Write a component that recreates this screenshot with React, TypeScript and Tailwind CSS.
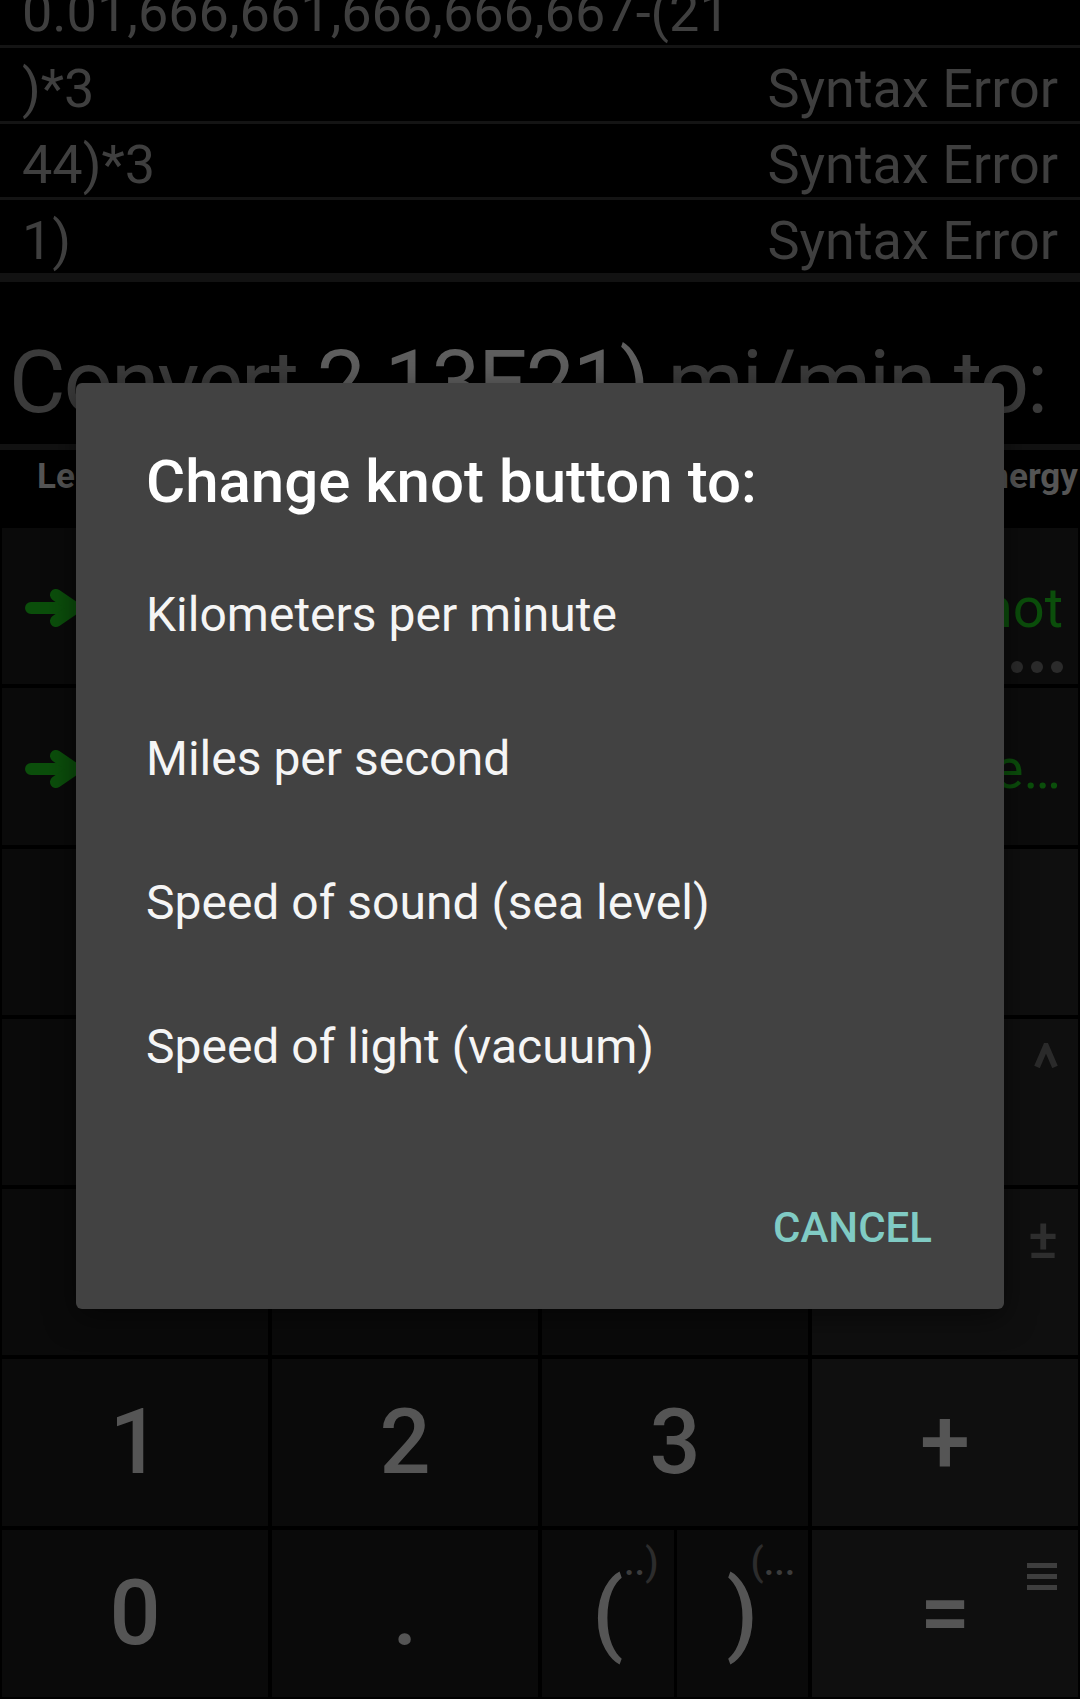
import React from 'react';

/**
 * Unit converter screen with the "Change knot button to:" dialog open.
 * Background colours are already dimmed as under the dialog scrim.
 */

const historyRows = [
  { expr: '0.01,666,661,666,666,667-(21', result: '' },
  { expr: ')*3', result: 'Syntax Error' },
  { expr: '44)*3', result: 'Syntax Error' },
  { expr: '1)', result: 'Syntax Error' },
];

const tabs = ['Length', 'Area', 'Speed', 'Energy'];

const options = [
  'Kilometers per minute',
  'Miles per second',
  'Speed of sound (sea level)',
  'Speed of light (vacuum)',
];

function GreenArrow() {
  return (
    <svg width="60" height="40" viewBox="0 0 60 40" fill="none">
      <path d="M6 20 H56" stroke="#0b4e0b" strokeWidth="12" strokeLinecap="round" />
      <path d="M31 7 L50 20 L31 33" stroke="#0b4e0b" strokeWidth="12" strokeLinecap="round" strokeLinejoin="round" />
    </svg>
  );
}

const digit = "text-[90px] leading-none font-medium text-[#555555]";

export default function App() {
  return (
    <div className="relative w-[1080px] h-[1699px] overflow-hidden bg-black font-['Roboto',sans-serif]">
      {/* history list, scrolled so the first row is cut off */}
      <div className="h-[273px] overflow-hidden">
        <div className="-mt-[28px] flex flex-col">
          {historyRows.map((row, i) => (
            <div
              key={i}
              className={
                'flex h-[76px] justify-between px-[22px] pt-[8px] text-[54px] leading-[65px] text-[#3f3f3f] whitespace-nowrap' +
                (i < historyRows.length - 1 ? ' border-b-[3px] border-[#141414]' : '')
              }
            >
              <span>{row.expr}</span>
              <span>{row.result}</span>
            </div>
          ))}
        </div>
      </div>
      <div className="h-[9px] bg-[#121212]" />

      {/* convert prompt */}
      <div className="flex h-[162px] items-end pb-[11px] pl-[9px] text-[87px] leading-[102px] tracking-[-2px] whitespace-nowrap text-[#3b3b3b]">
        <span>
          Convert <span className="text-[#5e5e5e]">2.13E21)</span> mi/min to:
        </span>
      </div>
      <div className="h-[6px] bg-[#121212]" />

      {/* category tabs */}
      <div className="flex h-[78px] items-start justify-between pl-[37px] pr-[2px] pt-[6px] text-[35px] leading-[41px] font-bold text-[#555555]">
        {tabs.map((t) => (
          <span key={t}>{t}</span>
        ))}
      </div>

      {/* keypad */}
      <div className="flex flex-col gap-[4px] px-[2px]">
        <div className="flex h-[156px] gap-[4px]">
          <div className="flex flex-[3] items-center bg-[#0a0a0a] pl-[23px] pt-[4px]">
            <GreenArrow />
          </div>
          <div className="flex w-[266px] flex-col items-end bg-[#0c0c0c] pr-[15px] pt-[52px]">
            <span className="text-[56px] leading-[56px] text-[#0b4e0b]">knot</span>
            <div className="mt-[25px] flex gap-[8px]">
              <span className="h-[12px] w-[12px] rounded-full bg-[#2b2b2b]" />
              <span className="h-[12px] w-[12px] rounded-full bg-[#2b2b2b]" />
              <span className="h-[12px] w-[12px] rounded-full bg-[#2b2b2b]" />
            </div>
          </div>
        </div>
        <div className="flex h-[157px] gap-[4px]">
          <div className="flex flex-[3] items-center bg-[#0a0a0a] pl-[23px] pt-[4px]">
            <GreenArrow />
          </div>
          <div className="flex w-[266px] flex-col items-end bg-[#0c0c0c] pr-[17px] pt-[53px]">
            <span className="text-[56px] leading-[56px] text-[#0b4e0b]">More…</span>
          </div>
        </div>

        <div className="grid h-[166px] grid-cols-4 gap-[4px]">
          <div className="bg-[#0a0a0a]" />
          <div className="bg-[#0a0a0a]" />
          <div className="bg-[#0a0a0a]" />
          <div className="bg-[#0f0f0f]" />
        </div>
        <div className="grid h-[166px] grid-cols-4 gap-[4px]">
          <div className="bg-[#0a0a0a]" />
          <div className="bg-[#0a0a0a]" />
          <div className="bg-[#0a0a0a]" />
          <div className="relative bg-[#0f0f0f]">
            <svg className="absolute right-[20px] top-[24px]" width="24" height="25" viewBox="0 0 24 25" fill="none">
              <path d="M3 24 L12 3 L21 24" stroke="#2a2a2a" strokeWidth="6" strokeLinejoin="miter" />
            </svg>
          </div>
        </div>
        <div className="grid h-[166px] grid-cols-4 gap-[4px]">
          <div className="bg-[#0a0a0a]" />
          <div className="bg-[#0a0a0a]" />
          <div className="bg-[#0a0a0a]" />
          <div className="relative bg-[#0f0f0f]">
            <span className="absolute right-[20px] top-[22px] text-[56px] leading-none font-medium text-[#2e2e2e]">±</span>
          </div>
        </div>
        <div className="grid h-[167px] grid-cols-4 gap-[4px]">
          <div className="flex items-center justify-center bg-[#0a0a0a]"><span className={digit}>1</span></div>
          <div className="flex items-center justify-center bg-[#0a0a0a]"><span className={digit}>2</span></div>
          <div className="flex items-center justify-center bg-[#0a0a0a]"><span className={digit}>3</span></div>
          <div className="flex items-center justify-center bg-[#0f0f0f]"><span className={digit}>+</span></div>
        </div>
        <div className="grid h-[167px] grid-cols-4 gap-[4px]">
          <div className="flex items-center justify-center bg-[#0a0a0a]"><span className={digit}>0</span></div>
          <div className="flex items-center justify-center bg-[#0a0a0a]"><span className={digit}>.</span></div>
          <div className="flex gap-[3px]">
            <div className="relative flex flex-1 items-center justify-center bg-[#0a0a0a]">
              <span className={digit}>(</span>
              <span className="absolute left-[82px] top-[13px] text-[38px] leading-none font-medium">
                <span className="text-[#3c3c3c]">..</span>
                <span className="text-[#2c2c2c]">)</span>
              </span>
            </div>
            <div className="relative flex flex-1 items-center justify-center bg-[#0a0a0a]">
              <span className={digit}>)</span>
              <span className="absolute left-[74px] top-[13px] text-[38px] leading-none font-medium">
                <span className="text-[#2c2c2c]">(</span>
                <span className="text-[#3c3c3c]">...</span>
              </span>
            </div>
          </div>
          <div className="relative flex items-center justify-center bg-[#0f0f0f]">
            <span className={digit}>=</span>
            <svg className="absolute right-[21px] top-[33px]" width="30" height="27" viewBox="0 0 30 27">
              <rect x="0" y="0" width="30" height="5" fill="#3e3e3e" />
              <rect x="0" y="11" width="30" height="5" fill="#3e3e3e" />
              <rect x="0" y="22" width="30" height="5" fill="#3e3e3e" />
            </svg>
          </div>
        </div>
      </div>

      {/* dialog */}
      <div className="absolute left-[76px] top-[383px] flex h-[926px] w-[928px] flex-col rounded-[6px] bg-[#424242] shadow-[0_8px_30px_rgba(0,0,0,0.5)]">
        <h2 className="pl-[70px] pt-[64px] text-[60px] leading-[70px] font-medium text-white">
          Change knot button to:
        </h2>
        <ul className="mt-[26px]">
          {options.map((o) => (
            <li key={o} className="h-[144px] pl-[70px] text-[48px] leading-[144px] text-[#f5f5f5]">
              {o}
            </li>
          ))}
        </ul>
        <div className="mt-[55px] flex justify-end pr-[72px]">
          <span className="text-[42px] leading-[108px] font-medium text-[#80cbc4]">CANCEL</span>
        </div>
      </div>
    </div>
  );
}
